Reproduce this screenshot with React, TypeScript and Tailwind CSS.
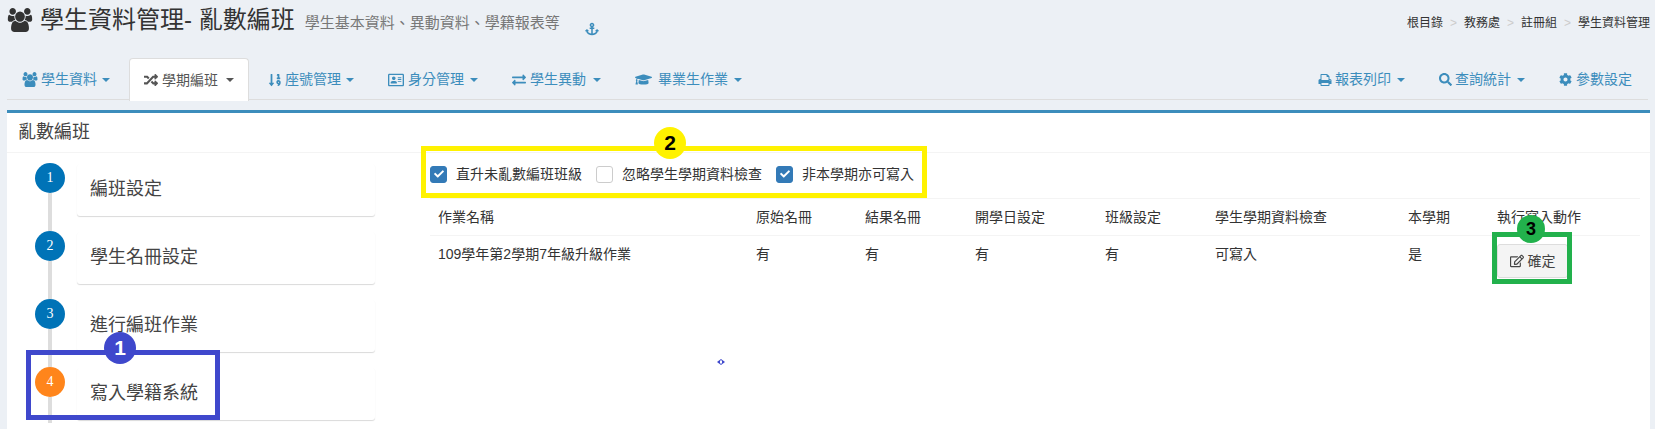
import type { ReactNode } from 'react';
import {
  FaAnchor,
  FaCheck,
  FaCog,
  FaExchangeAlt,
  FaGraduationCap,
  FaRandom,
  FaRegAddressCard,
  FaRegEdit,
  FaSearch,
  FaSortNumericDown,
} from 'react-icons/fa';

const FONT = 'font-["Liberation_Sans","Noto_Sans_CJK_TC",sans-serif]';

const UsersIcon = ({ width, height }: { width: number; height: number }) => (
  <svg width={width} height={height} viewBox="0 0 2048 1792" preserveAspectRatio="none" fill="currentColor">
    <path d="M657 896q-162 5-265 128h-134q-82 0-138-40.5t-56-118.5q0-353 124-353 6 0 43.5 21t97.5 42.5 119 21.5q67 0 133-23-5 37-5 66 0 139 81 256zm1071 637q0 120-73 189.5t-194 69.5h-874q-121 0-194-69.5t-73-189.5q0-53 3.5-103.5t14-109 26.5-108.5 43-97.5 62-81 85.5-53.5 111.5-20q10 0 43 21.5t73 48 107 48 135 21.5 135-21.5 107-48 73-48 43-21.5q61 0 111.5 20t85.5 53.5 62 81 43 97.5 26.5 108.5 14 109 3.5 103.5zm-1024-1277q0 106-75 181t-181 75-181-75-75-181 75-181 181-75 181 75 75 181zm704 384q0 159-112.5 271.5t-271.5 112.5-271.5-112.5-112.5-271.5 112.5-271.5 271.5-112.5 271.5 112.5 112.5 271.5zm576 225q0 78-56 118.5t-138 40.5h-134q-103-123-265-128 81-117 81-256 0-29-5-66 66 23 133 23 59 0 119-21.5t97.5-42.5 43.5-21q124 0 124 353zm-128-609q0 106-75 181t-181 75-181-75-75-181 75-181 181-75 181 75 75 181z" />
  </svg>
);

const PrintIcon = () => (
  <svg width={14} height={14} viewBox="0 0 1792 1792" fill="currentColor">
    <path d="M448 1536h896v-256h-896v256zm0-640h896v-384h-160q-40 0-68-28t-28-68v-160h-640v640zm1152 64q0-26-19-45t-45-19-45 19-19 45 19 45 45 19 45-19 19-45zm128 0v416q0 13-9.5 22.5t-22.5 9.5h-224v160q0 40-28 68t-68 28h-960q-40 0-68-28t-28-68v-160h-224q-13 0-22.5-9.5t-9.5-22.5v-416q0-79 56.5-135.5t135.5-56.5h64v-544q0-40 28-68t68-28h672q40 0 88 20t76 48l152 152q28 28 48 76t20 88v256h64q79 0 135.5 56.5t56.5 135.5z" />
  </svg>
);

const Caret = ({ gap = 'ml-[6px]' }: { gap?: string }) => (
  <span className={`${gap} inline-block h-0 w-0 border-x-[4px] border-t-[4px] border-x-transparent border-t-current`} />
);

const NavTab = ({
  icon,
  iconBox,
  label,
  active,
  caret = true,
  caretGap,
}: {
  icon: ReactNode;
  iconBox: string;
  label: string;
  active?: boolean;
  caret?: boolean;
  caretGap?: string;
}) => (
  <div
    className={`mr-[4px] flex items-center rounded-t-[4px] border border-b-0 px-[14px] text-[14px] last:mr-[1px] ${
      active
        ? 'mb-[-1px] h-[43px] border-[#ddd] bg-white text-[#555]'
        : 'h-[42px] border-transparent text-[#3c8dbc]'
    }`}
  >
    <span className={`flex items-center ${iconBox}`}>{icon}</span>
    {label}
    {caret && <Caret gap={caretGap} />}
  </div>
);

const Step = ({ n, label, current, last }: { n: number; label: string; current?: boolean; last?: boolean }) => (
  <div className={`flex ${last ? 'h-[56px]' : 'h-[68px]'}`}>
    <div className="flex w-[30px] flex-col items-center">
      <div
        className={`flex h-[30px] w-[30px] shrink-0 items-center justify-center rounded-full pb-[2px] font-["Liberation_Serif",serif] text-[14px] text-white ${
          current ? 'bg-[#ff851b]' : 'bg-[#0073b7]'
        }`}
      >
        {n}
      </div>
      <div className="w-[4px] flex-1 bg-[#ddd]" />
    </div>
    <div className="ml-[12px] mt-[1px] flex h-[52px] w-[298px] items-center rounded-[3px] bg-white pb-[1px] pl-[13px] text-[18px] text-[#444] shadow-[0_1px_1px_rgba(0,0,0,0.15)]">
      {label}
    </div>
  </div>
);

const Check = ({ label, checked }: { label: string; checked?: boolean }) => (
  <label className="mr-[14px] flex items-center text-[14px] text-[#333]">
    <span
      className={`mr-[9px] flex h-[17px] w-[17px] items-center justify-center rounded-[3px] border ${
        checked ? 'border-[#337ab7] bg-[#337ab7]' : 'border-[#ccc] bg-white'
      }`}
    >
      {checked && <FaCheck className="text-white" size={10} />}
    </span>
    {label}
  </label>
);

const Marker = ({ className, children }: { className: string; children: ReactNode }) => (
  <div
    className={`absolute flex items-center justify-center rounded-full font-["Liberation_Sans",sans-serif] font-bold ${className}`}
  >
    {children}
  </div>
);

const columns = [
  { name: '作業名稱', value: '109學年第2學期7年級升級作業', width: 'w-[318px]' },
  { name: '原始名冊', value: '有', width: 'w-[109px]' },
  { name: '結果名冊', value: '有', width: 'w-[110px]' },
  { name: '開學日設定', value: '有', width: 'w-[130px]' },
  { name: '班級設定', value: '有', width: 'w-[110px]' },
  { name: '學生學期資料檢查', value: '可寫入', width: 'w-[193px]' },
  { name: '本學期', value: '是', width: 'w-[89px]' },
];

export default function App() {
  return (
    <div className={`relative h-[429px] w-[1655px] overflow-hidden bg-[#ecf0f5] ${FONT}`}>
      {/* Page Header */}
      <div className="flex h-[58px] items-start justify-between pl-[7px] pr-[5px]">
        <div className="flex items-baseline pt-[4px] text-[#333]">
          <span className="mr-[7px] self-center">
            <UsersIcon width={26} height={24} />
          </span>
          <h1 className="text-[24px] leading-[32px]">學生資料管理- 亂數編班</h1>
          <span className="ml-[10px] text-[15px] text-[#777]">學生基本資料、異動資料、學籍報表等</span>
          <FaAnchor className="ml-[25px] self-end text-[#3c8dbc]" size={14} />
        </div>
        <div className="flex items-center pt-[15px] text-[12px] leading-[16px] text-[#333]">
          根目錄<span className="mx-[7px] text-[#ccc]">&gt;</span>
          教務處<span className="mx-[7px] text-[#ccc]">&gt;</span>
          註冊組<span className="mx-[7px] text-[#ccc]">&gt;</span>
          學生資料管理
        </div>
      </div>

      {/* Tabs */}
      <div className="mx-[7px] flex h-[42px] justify-between border-b border-[#ddd]">
        <div className="flex">
          <NavTab icon={<UsersIcon width={16} height={15} />} iconBox="w-[19px]" label="學生資料" caretGap="ml-[5px]" />
          <NavTab icon={<FaRandom size={14} />} iconBox="w-[18px]" label="學期編班" caretGap="ml-[8px]" active />
          <NavTab icon={<FaSortNumericDown size={14} />} iconBox="w-[17px]" label="座號管理" caretGap="ml-[5px]" />
          <NavTab icon={<FaRegAddressCard size={16} />} iconBox="w-[20px]" label="身分管理" />
          <NavTab icon={<FaExchangeAlt size={14} />} iconBox="w-[18px]" label="學生異動" caretGap="ml-[7px]" />
          <NavTab icon={<FaGraduationCap size={17} />} iconBox="w-[23px]" label="畢業生作業" />
        </div>
        <div className="flex">
          <NavTab icon={<PrintIcon />} iconBox="w-[17px]" label="報表列印" />
          <NavTab icon={<FaSearch size={13} />} iconBox="w-[16px]" label="查詢統計" />
          <NavTab icon={<FaCog size={13} />} iconBox="w-[17px]" label="參數設定" caret={false} />
        </div>
      </div>

      {/* Panel */}
      <div className="ml-[7px] mr-[5px] mt-[10px] h-[400px] border-t-[3px] border-[#3c8dbc] bg-white">
        <div className="flex h-[40px] items-center border-b border-[#f4f4f4] pl-[11px] text-[18px] text-[#444]">
          亂數編班
        </div>
        <div className="flex">
          <div className="ml-[28px] mt-[10px] w-[340px]">
            <Step n={1} label="編班設定" />
            <Step n={2} label="學生名冊設定" />
            <Step n={3} label="進行編班作業" />
            <Step n={4} label="寫入學籍系統" current last />
          </div>
          <div className="ml-[55px] w-[1210px]">
            <div className="flex h-[45px] items-center pb-[3px]">
              <Check label="直升未亂數編班班級" checked />
              <Check label="忽略學生學期資料檢查" />
              <Check label="非本學期亦可寫入" checked />
            </div>
            <table className="w-full table-fixed border-t border-[#f4f4f4] text-[14px] text-[#333]">
              <thead>
                <tr className="h-[37px] border-b border-[#f4f4f4]">
                  {columns.map(col => (
                    <th key={col.name} className={`${col.width} pl-[8px] text-left font-normal`}>
                      {col.name}
                    </th>
                  ))}
                  <th className="pl-[8px] text-left font-normal">執行寫入動作</th>
                </tr>
              </thead>
              <tbody>
                <tr>
                  {columns.map(col => (
                    <td key={col.name} className="pl-[8px] pt-[8px] align-top">
                      {col.value}
                    </td>
                  ))}
                  <td className="pl-[8px] pt-[8px] align-top">
                    <button className="flex h-[34px] w-[71px] items-center justify-center rounded-[3px] border border-[#ddd] bg-[#f4f4f4] text-[14px] text-[#444]">
                      <FaRegEdit className="mr-[4px]" size={14} />
                      確定
                    </button>
                  </td>
                </tr>
              </tbody>
            </table>
          </div>
        </div>
      </div>

      {/* Annotations */}
      <div className="absolute left-[26px] top-[350px] h-[70px] w-[194px] border-[5px] border-[#3f48cc]" />
      <Marker className="left-[104px] top-[332px] h-[32px] w-[32px] bg-[#3f48cc] text-[21px] font-black text-white">1</Marker>
      <div className="absolute left-[421px] top-[146px] h-[52px] w-[506px] border-[5px] border-[#fff200]" />
      <Marker className="left-[654px] top-[127px] h-[32px] w-[32px] bg-[#fff200] text-[21px] font-black text-black">2</Marker>
      <div className="absolute left-[1492px] top-[232px] h-[52px] w-[80px] border-[5px] border-[#22b14c]" />
      <Marker className="left-[1517px] top-[215px] h-[28px] w-[28px] bg-[#22b14c] text-[18px] text-black">3</Marker>
      <svg className="absolute left-[717px] top-[359px]" width="8" height="6" viewBox="0 0 8 6">
        <path d="M4 0 L8 3 L4 6 L0 3 Z" fill="#3f48cc" />
        <rect x="3" y="1.5" width="2" height="3" fill="#fff" />
      </svg>
    </div>
  );
}
